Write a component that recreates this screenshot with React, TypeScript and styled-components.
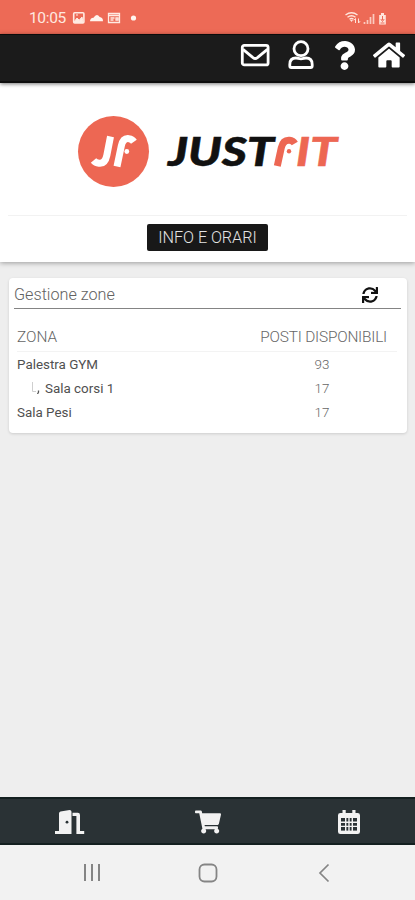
import React from "react";
import styled, { createGlobalStyle } from "styled-components";
import { FaQuestion, FaHome, FaSync, FaShoppingCart } from "react-icons/fa";

const GlobalStyle = createGlobalStyle`
  * { box-sizing: border-box; }
  body { margin: 0; background: #eeeeee; font-family: Roboto, "Liberation Sans", sans-serif; }
  svg { display: block; flex: none; }
`;

const Screen = styled.div`
  display: flex;
  flex-direction: column;
  width: 415px;
  height: 900px;
  overflow: hidden;
  background: #eeeeee;
`;

const StatusBar = styled.div`
  display: flex;
  align-items: center;
  height: 34px;
  padding: 2px 27px 0 29px;
  background: #ed6a56;
  color: #ffe9e0;
`;

const Clock = styled.span`
  width: 43px;
  font-size: 15.5px;
  line-height: 18px;
  letter-spacing: -0.35px;
`;

const StatusSignals = styled.div`
  margin-left: auto;
`;

const TopBar = styled.header`
  position: relative;
  z-index: 2;
  display: flex;
  justify-content: flex-end;
  height: 49px;
  padding: 4px 4px 0 0;
  background: #1b1b1b;
  border-top: 1px solid #0b0b0b;
  border-bottom: 2px solid #0d0d0d;
  box-shadow: 0 1px 4px rgba(0, 0, 0, 0.55);
  color: #fff;
`;

const IconButton = styled.button<{ $width: number }>`
  display: flex;
  justify-content: center;
  align-items: center;
  width: ${(p) => p.$width}px;
  height: 32px;
  padding: 0;
  border: 0;
  background: none;
  color: inherit;
`;

const Brand = styled.section`
  position: relative;
  z-index: 1;
  height: 179px;
  padding: 0 8px;
  background: #fff;
  box-shadow: 0 1px 5px rgba(0, 0, 0, 0.35);
`;

const LogoArea = styled.div`
  height: 133px;
  padding: 30px 0 0 67px;
  border-bottom: 1px solid #f2f2f2;
`;

const InfoButton = styled.button`
  display: block;
  width: 121px;
  height: 27px;
  margin: 8px auto 0 139px;
  padding: 0;
  border: 0;
  border-radius: 2px;
  background: #181818;
  color: #e4e4e4;
  font: 300 16.2px/27px Roboto, sans-serif;
  letter-spacing: -0.05px;
`;

const Card = styled.main`
  height: 155px;
  margin: 16px 8px 0 9px;
  padding: 0 6px 0 5px;
  border-radius: 4px;
  background: #fff;
  box-shadow: 0 1px 3px rgba(0, 0, 0, 0.14);
`;

const CardHeader = styled.div`
  display: flex;
  justify-content: space-between;
  align-items: center;
  height: 31px;
  padding: 3px 23px 0 0;
  border-bottom: 1px solid #848484;
  color: #111;
`;

const CardTitle = styled.h1`
  margin: 0;
  color: #626262;
  font-size: 16.2px;
  font-weight: 300;
  letter-spacing: 0;
`;

const Table = styled.div`
  padding: 14px 4px 0 3px;
`;

const Row = styled.div<{ $head?: boolean }>`
  display: grid;
  grid-template-columns: 1fr 144px;
  align-items: center;
  height: ${(p) => (p.$head ? 29 : 24.3)}px;
  border-bottom: ${(p) => (p.$head ? "1px solid #f3f3f3" : "0")};
  color: ${(p) => (p.$head ? "#646464" : "#505050")};
  font-size: ${(p) => (p.$head ? 15.4 : 13.4)}px;
  font-weight: ${(p) => (p.$head ? 300 : 400)};
`;

const Zone = styled.span<{ $nested?: boolean }>`
  display: flex;
  align-items: center;
  gap: 5px;
  padding-left: ${(p) => (p.$nested ? 14 : 0)}px;
`;

const Places = styled.span<{ $head?: boolean }>`
  padding-right: ${(p) => (p.$head ? 10 : 6)}px;
  text-align: ${(p) => (p.$head ? "right" : "center")};
  white-space: nowrap;
  color: #666;
  font-weight: 300;
  letter-spacing: ${(p) => (p.$head ? -0.2 : 0)}px;
`;

const TabBar = styled.nav`
  display: grid;
  grid-template-columns: 138px 140px 1fr;
  align-items: center;
  height: 48px;
  margin-top: auto;
  border-top: 2px solid #142020;
  border-bottom: 2px solid #142020;
  background: #2a3235;
  color: #f2f2f2;
`;

const Tab = styled.button<{ $offset?: number }>`
  display: flex;
  justify-content: center;
  padding: 2px 0 0 ${(p) => p.$offset ?? 0}px;
  border: 0;
  background: none;
  color: inherit;
`;

const SystemNav = styled.div`
  display: grid;
  grid-template-columns: 20px 20px 12px;
  column-gap: 96px;
  justify-content: start;
  align-items: center;
  height: 55px;
  padding: 1px 0 0 82px;
  background: #f2f2f2;
  color: #858585;
`;

const NotificationIcons = () => (
  <svg width="66" height="14" viewBox="0 0 66 14" fill="none" stroke="#ffeae2">
    <rect x="1.7" y="1.7" width="10.2" height="10.2" rx="1" strokeWidth="1.6" />
    <path d="M2 11l3-4 2.2 2.2L10 6l1 5z" fill="#ffeae2" />
    <path d="M4 4h2" />
    <path d="M18 10.3q0-3.2 3.5-3.6 3.2-5 6.2-.8 3.3.4 3.3 4.4z" fill="#fff5ef" stroke="none" />
    <path d="M36.5 2.5h11v9h-11zM36.5 4.5h11M38.5 7h4M38.5 9h3M44 7h2v2h-2z" strokeWidth="1.3" />
    <circle cx="61.5" cy="7" r="2.6" fill="#fff5ef" stroke="none" />
  </svg>
);

const SignalIcons = () => (
  <svg width="44" height="15" viewBox="0 0 44 15" fill="none" stroke="#ffe5dc">
    <path d="M1.5 4q6-4.5 12 0M3.5 6.2q4-3 8 0M5.5 8.3q2-1.5 4 0" strokeWidth="1.4" />
    <path d="M6 9h3l-1.5 2z" fill="#ffe5dc" stroke="none" />
    <path d="M11.5 12V7.5m-1.6 1.8 1.6-1.8M14.5 7.5V12m0 0 1.6-1.8" />
    <path d="M20.5 13v-2M23.5 13V9M26.5 13V6M29.5 13V3" strokeWidth="1.7" strokeOpacity=".78" />
    <path d="M37 2h3v2h1.8v9.5h-6.6V4H37z" fill="#ffe5dc" stroke="none" />
    <path d="M38.5 5v4M36.8 8l1.7 2.5L40.2 8M36.5 12h4" stroke="#ed6a56" />
  </svg>
);

const EnvelopeIcon = () => (
  <svg width="30" height="24" viewBox="0 0 30 24" fill="none" stroke="currentColor" strokeWidth="2.8" strokeLinejoin="round">
    <rect x="2.3" y="2.3" width="25.8" height="19.6" rx="2" />
    <path d="M3 6.4l10 8.2q2.2 1.7 4.4 0l10-8.2" />
  </svg>
);

const UserIcon = () => (
  <svg width="26" height="30" viewBox="0 0 26 30" fill="none" stroke="currentColor" strokeWidth="2.8" strokeLinejoin="round">
    <circle cx="13" cy="8.7" r="7" />
    <path d="M8 18c2.2 0 2.5.8 5 .8s2.8-.8 5-.8q6.2 0 6.2 6.4V26q0 1.5-1.5 1.5H3.3q-1.5 0-1.5-1.5v-1.6Q1.8 18 8 18z" />
  </svg>
);

const DoorIcon = () => (
  <svg width="31" height="25" viewBox="0 0 31 25" fill="currentColor">
    <path d="M1 21h4V3.4Q5 2 6.5 1.6L15.6 0Q17.5 0 17.5 1.8V24H1z" />
    <path d="M18.5 2.8h5.3Q26 2.8 26 5v16h4.2v3h-7.8V6h-3.9z" />
    <circle cx="13" cy="12.2" r="1.4" fill="#2a3235" />
  </svg>
);

const CalendarIcon = () => (
  <svg width="22" height="25" viewBox="0 0 22 25" fill="none">
    <path d="M4.5 0h3.2v3h6.6V0h3.2v3h2.1Q22 3 22 5.3v16.4Q22 24 19.6 24H2.4Q0 24 0 21.7V5.3Q0 3 2.4 3h2.1z" fill="currentColor" />
    <rect x="3" y="8" width="16" height="12.6" fill="#2a3235" />
    <path d="M7.7 8v13M14.3 8v13M11 8v13M3 12.2h16M3 16.4h16" stroke="currentColor" strokeWidth="1.4" />
  </svg>
);

const Logo = () => (
  <svg width="270" height="76" viewBox="0 0 270 76" role="img" aria-label="JustFit">
    <circle cx="38.5" cy="38.5" r="35.5" fill="#ed6753" />
    <g fill="none" stroke="#fff" strokeWidth="7" strokeLinejoin="round">
      <path d="M35.5 23.5l-3.7 19Q30 51 24 50.3q-3.5-.4-5.5-2.8" />
      <path d="M42 53.5l4.3-20.5q1.8-8.3 7.8-7.3 3 .4 4.8 3" />
    </g>
    <circle cx="51.8" cy="38.5" r="2.4" fill="#fff" />
    <g fontFamily="Lato, sans-serif" fontSize="40.5" fontStyle="italic" fontWeight="900" strokeWidth=".5">
      <text x="93" y="53" fill="#111" stroke="#111" textLength="106" lengthAdjust="spacingAndGlyphs">JUST</text>
      <text x="221" y="53" fill="#ed6753" stroke="#ed6753" textLength="41" lengthAdjust="spacingAndGlyphs">IT</text>
    </g>
    <path d="M202.3 53l4-18.3q1.8-8 8.3-7.4 3.5.3 5.2 3.2" fill="none" stroke="#ed6753" strokeWidth="7" />
    <circle cx="214" cy="38.2" r="2.2" fill="#ed6753" />
  </svg>
);

const NestedMark = () => (
  <svg width="9" height="12" viewBox="0 0 9 12" fill="none">
    <path d="M1.5 0v9.5H5" stroke="#cfcfcf" />
    <path d="M7.5 8.5v1.7L6.5 12" stroke="#555" strokeWidth="1.3" />
  </svg>
);

const zones = [
  { name: "Palestra GYM", places: 93 },
  { name: "Sala corsi 1", places: 17, nested: true },
  { name: "Sala Pesi", places: 17 },
];

export default function App() {
  return (
    <>
      <GlobalStyle />
      <Screen>
        <StatusBar>
          <Clock>10:05</Clock>
          <NotificationIcons />
          <StatusSignals><SignalIcons /></StatusSignals>
        </StatusBar>
        <TopBar>
          <IconButton $width={48} aria-label="Messaggi"><EnvelopeIcon /></IconButton>
          <IconButton $width={43} aria-label="Profilo"><UserIcon /></IconButton>
          <IconButton $width={45} aria-label="Aiuto"><FaQuestion size={29} /></IconButton>
          <IconButton $width={44} aria-label="Home"><FaHome size={32} /></IconButton>
        </TopBar>
        <Brand>
          <LogoArea><Logo /></LogoArea>
          <InfoButton>INFO E ORARI</InfoButton>
        </Brand>
        <Card>
          <CardHeader>
            <CardTitle>Gestione zone</CardTitle>
            <FaSync size={16} />
          </CardHeader>
          <Table>
            <Row $head>
              <Zone>ZONA</Zone>
              <Places $head>POSTI DISPONIBILI</Places>
            </Row>
            {zones.map((zone) => (
              <Row key={zone.name}>
                <Zone $nested={zone.nested}>
                  {zone.nested && <NestedMark />}
                  {zone.name}
                </Zone>
                <Places>{zone.places}</Places>
              </Row>
            ))}
          </Table>
        </Card>
        <TabBar>
          <Tab aria-label="Ingressi"><DoorIcon /></Tab>
          <Tab aria-label="Carrello"><FaShoppingCart size={26} /></Tab>
          <Tab $offset={4} aria-label="Calendario"><CalendarIcon /></Tab>
        </TabBar>
        <SystemNav>
          <svg width="20" height="20" viewBox="0 0 20 20" stroke="currentColor" strokeWidth="2">
            <path d="M3 1v17M10 1v17M17 1v17" />
          </svg>
          <svg width="20" height="20" viewBox="0 0 20 20" fill="none" stroke="currentColor" strokeWidth="1.8">
            <rect x="1.5" y="1.5" width="17" height="17" rx="5" />
          </svg>
          <svg width="16" height="20" viewBox="-4 0 16 20" fill="none" stroke="currentColor" strokeWidth="1.7">
            <path d="M10.5 1.5L2 10l8.5 8.5" />
          </svg>
        </SystemNav>
      </Screen>
    </>
  );
}
